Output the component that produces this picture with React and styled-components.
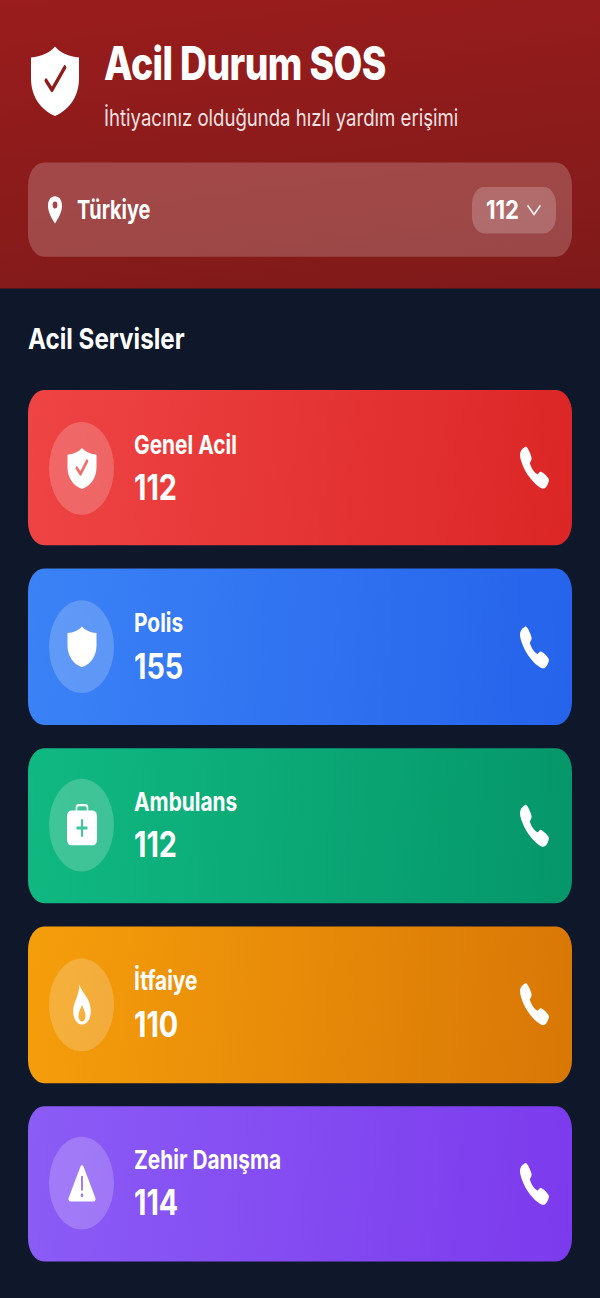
import React from "react";
import styled, { createGlobalStyle } from "styled-components";
import { IoCall } from "react-icons/io5";
import { FiChevronDown } from "react-icons/fi";

const Global = createGlobalStyle`
  html, body { margin: 0; padding: 0; height: 100%; background: #0f172a; overflow: hidden; }
  body { font-family: Inter, "Liberation Sans", sans-serif; color: #fff; font-optical-sizing: none; font-variation-settings: "opsz" 14; }
`;

/* The reference is a 600x895 page stretched vertically to 1298px. */
const Stage = styled.div`
  width: 600px;
  height: 895.2px;
  transform: scaleY(1.45);
  transform-origin: top left;
  background: #0f172a;
`;

const Header = styled.header`
  height: 198.6px;
  box-sizing: border-box;
  padding: 24px 28px 0;
  background: linear-gradient(175deg, #9a1c1c 0%, #7f1a1a 100%);
`;

const Brand = styled.div`
  display: flex;
  align-items: flex-start;
  gap: 22px;
`;

const BrandIcon = styled.div`
  width: 54px;
  height: 64px;
  display: flex;
  align-items: center;
  justify-content: center;
`;

const BrandText = styled.div`
  width: 440px;
  height: 68.7px;
`;

const Title = styled.h1`
  margin: 0;
  width: fit-content;
  font-size: 32px;
  line-height: 40px;
  font-weight: 800;
  letter-spacing: -0.5px;
  white-space: nowrap;
  transform: scaleX(1.166);
  transform-origin: left center;
`;

const Subtitle = styled.p`
  margin: 4.7px 0 0;
  width: fit-content;
  font-size: 16px;
  line-height: 24px;
  font-weight: 400;
  color: rgba(255, 255, 255, 0.9);
  white-space: nowrap;
  transform: scaleX(1.161);
  transform-origin: left center;
`;

const LocationBar = styled.div`
  margin-top: 19.7px;
  height: 64.8px;
  box-sizing: border-box;
  padding: 0 16px;
  border-radius: 16px;
  background: rgba(255, 255, 255, 0.2);
  display: flex;
  align-items: center;
  justify-content: space-between;
`;

const Place = styled.div`
  display: flex;
  align-items: center;
  gap: 11px;
`;

const PlaceName = styled.span`
  font-size: 18px;
  font-weight: 700;
  transform: scaleX(1.105);
  transform-origin: left center;
`;

const CodePill = styled.div`
  width: 84px;
  height: 32.4px;
  box-sizing: border-box;
  padding-left: 14px;
  border-radius: 12px;
  background: rgba(255, 255, 255, 0.2);
  display: flex;
  align-items: center;
  gap: 9px;
`;

const PillValue = styled.span`
  font-size: 18px;
  font-weight: 700;
  transform: scaleX(1.23);
  transform-origin: left center;
`;

const Main = styled.main`
  padding: 0 28px;
`;

const SectionTitle = styled.h2`
  margin: 0;
  width: fit-content;
  height: 70.4px;
  box-sizing: border-box;
  padding-top: 23px;
  font-size: 20px;
  line-height: 24px;
  font-weight: 700;
  transform: scaleX(1.21);
  transform-origin: left center;
`;

const List = styled.div`
  display: flex;
  flex-direction: column;
  gap: 16px;
`;

const Card = styled.div`
  height: 107.4px;
  box-sizing: border-box;
  padding: 0 23px 0 21px;
  border-radius: 16px;
  display: flex;
  align-items: center;
  gap: 20px;
  background: linear-gradient(97deg, ${(p) => p.$from}, ${(p) => p.$to});
`;

const IconCircle = styled.div`
  width: 65px;
  height: 64px;
  flex: none;
  border-radius: 50%;
  background: rgba(255, 255, 255, 0.2);
  display: flex;
  align-items: center;
  justify-content: center;
`;

const Info = styled.div`
  flex: 1;
  display: flex;
  flex-direction: column;
  align-items: flex-start;
  gap: 2px;
`;

const Label = styled.div`
  font-size: 18px;
  line-height: 26px;
  font-weight: 700;
  transform: scaleX(1.16);
  transform-origin: left center;
`;

const Number = styled.div`
  font-size: 24px;
  line-height: 30px;
  font-weight: 700;
  transform: scaleX(1.2);
  transform-origin: left center;
`;

const PhoneIcon = styled(IoCall)`
  width: 33px;
  height: 33px;
  margin-right: -2px;
  flex: none;
  color: #fff;
`;

const ServiceSvg = styled.svg`
  width: 30px;
  height: 30px;
  display: block;
`;

const shield = "M15 1 C18 3.6 23.5 5.2 29.5 5.6 V14 C29.5 21.5 24 26.8 15 29.2 C6 26.8 .5 21.5 .5 14 V5.6 C6.5 5.2 12 3.6 15 1 Z";

const GeneralIcon = ({ cut }) => (
  <ServiceSvg viewBox="0 0 30 30">
    <path d={shield} fill="#fff" />
    <path d="M9.8 14.8 L13.5 18.8 L20 10" fill="none" stroke={cut} strokeWidth="2.4" strokeLinecap="round" strokeLinejoin="round" />
  </ServiceSvg>
);

const PoliceIcon = () => (
  <ServiceSvg viewBox="0 0 30 30">
    <path d={shield} fill="#fff" />
  </ServiceSvg>
);

const KitIcon = ({ cut }) => (
  <ServiceSvg viewBox="0 0 30 30">
    <path d="M9.5 6 V3.2 C9.5 2 10.3 1.3 11.5 1.3 H18.5 C19.7 1.3 20.5 2 20.5 3.2 V6" fill="none" stroke="#fff" strokeWidth="1.6" />
    <rect x="0" y="5" width="30" height="24" rx="4" fill="#fff" />
    <path d="M15 11 V23 M9.5 17 H20.5" stroke={cut} strokeWidth="2" fill="none" />
  </ServiceSvg>
);

const FireIcon = ({ cut }) => (
  <ServiceSvg viewBox="0 0 30 30">
    <path d="M12.5 1 C14 6 23.8 10.5 23.8 19 C23.8 25 19.8 28.6 15 28.6 C10.2 28.6 6.2 25 6.2 19 C6.2 13.5 12 9 12.5 1 Z" fill="#fff" />
    <path d="M15 15 C16.5 18 18.5 20 18.5 22.5 C18.5 25 17 26.5 15 26.5 C13 26.5 11.5 25 11.5 22.5 C11.5 20 13.5 18 15 15 Z" fill={cut} />
  </ServiceSvg>
);

const WarnIcon = ({ cut }) => (
  <ServiceSvg viewBox="0 0 30 30">
    <path d="M15 2.7 C15.8 2.7 16.3 3.1 16.7 3.8 L28.3 25 C29 26.3 28.2 27.6 26.8 27.6 H3.2 C1.8 27.6 1 26.3 1.7 25 L13.3 3.8 C13.7 3.1 14.2 2.7 15 2.7 Z" fill="#fff" />
    <path d="M15 10 V20" stroke={cut} strokeWidth="2" fill="none" />
    <circle cx="15" cy="23.3" r="1.3" fill={cut} />
  </ServiceSvg>
);

const services = [
  { name: "Genel Acil", num: "112", from: "#ef4444", to: "#dc2626", Icon: GeneralIcon, cut: "#f26d6d" },
  { name: "Polis", num: "155", from: "#3b82f6", to: "#2563eb", Icon: PoliceIcon, cut: "#6aa0f8" },
  { name: "Ambulans", num: "112", from: "#10b981", to: "#059669", Icon: KitIcon, cut: "#3fc79a" },
  { name: "İtfaiye", num: "110", from: "#f59e0b", to: "#d97706", Icon: FireIcon, cut: "#f7b03c" },
  { name: "Zehir Danışma", num: "114", from: "#8b5cf6", to: "#7c3aed", Icon: WarnIcon, cut: "#a27cf8" },
];

export default function App() {
  return (
    <>
      <Global />
      <Stage>
        <Header>
          <Brand>
            <BrandIcon>
              <svg width="48" height="48" viewBox="0 0 48 48">
                <path d="M24 0 C29 4.4 38 7 48 7.6 V22 C48 34 39 43.5 24 48 C9 43.5 0 34 0 22 V7.6 C10 7 19 4.4 24 0 Z" fill="#fff" />
                <path d="M15 23.5 L21 30 L33.8 14.5" fill="none" stroke="#8f1b1b" strokeWidth="3" strokeLinecap="round" strokeLinejoin="round" />
              </svg>
            </BrandIcon>
            <BrandText>
              <Title>Acil Durum SOS</Title>
              <Subtitle>İhtiyacınız olduğunda hızlı yardım erişimi</Subtitle>
            </BrandText>
          </Brand>
          <LocationBar>
            <Place>
              <svg width="22" height="20" viewBox="0 0 22 20">
                <path fillRule="evenodd" d="M11 0.4 C15.2 0.4 18 3 18 7 C18 11.2 13.8 16 11 19.2 C8.2 16 4 11.2 4 7 C4 3 6.8 0.4 11 0.4 Z M11 4 A2.4 2.4 0 1 0 11 8.8 A2.4 2.4 0 1 0 11 4 Z" fill="#fff" />
              </svg>
              <PlaceName>Türkiye</PlaceName>
            </Place>
            <CodePill>
              <PillValue>112</PillValue>
              <FiChevronDown size={24} strokeWidth={1.5} color="rgba(255,255,255,0.9)" />
            </CodePill>
          </LocationBar>
        </Header>
        <Main>
          <SectionTitle>Acil Servisler</SectionTitle>
          <List>
            {services.map(({ name, num, from, to, Icon, cut }) => (
              <Card key={name} $from={from} $to={to}>
                <IconCircle>
                  <Icon cut={cut} />
                </IconCircle>
                <Info>
                  <Label>{name}</Label>
                  <Number>{num}</Number>
                </Info>
                <PhoneIcon />
              </Card>
            ))}
          </List>
        </Main>
      </Stage>
    </>
  );
}
